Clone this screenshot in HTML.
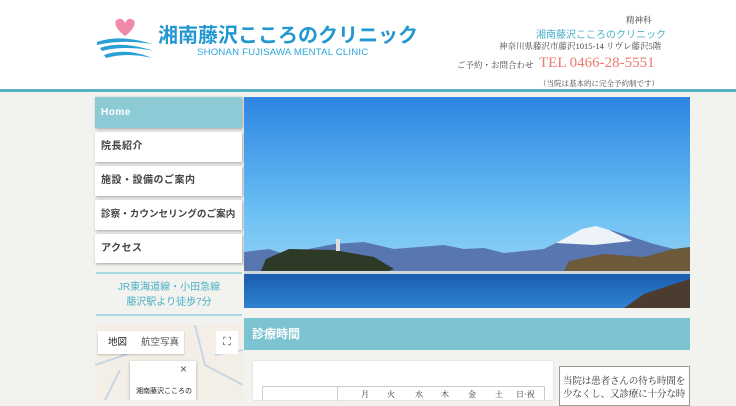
<!DOCTYPE html>
<html><head><meta charset="utf-8">
<style>
*{margin:0;padding:0;box-sizing:border-box}
body{width:736px;height:400px;overflow:hidden;background:#f2f2ee;font-family:"Liberation Sans","Noto Sans CJK JP",sans-serif;position:relative}
.hdr{position:absolute;left:0;top:0;width:736px;height:89px;background:#fff}
.line{position:absolute;left:0;top:89px;width:736px;height:3px;background:#56b3c6}
.abs{position:absolute;white-space:nowrap}
.nav{position:absolute;left:95px;width:147px;background:#fff;box-shadow:1px 1px 3px rgba(0,0,0,.35);font-size:10px;color:#444;padding-left:6px;font-weight:bold;letter-spacing:.5px}
.sep{position:absolute;left:96px;width:146px;height:2px;background:#a9d9e2}
</style></head><body>
<div class="hdr"></div>
<div class="line"></div>
<svg class="abs" style="left:94px;top:14px" width="60" height="50" viewBox="0 0 60 50">
<path d="M31 22 C20 14 19 6 25 5 C28 4 30 7 31 9 C32 7 34 4 37 5 C43 6 42 14 31 22Z" fill="#f08aa8"/>
<path d="M3 28 C20 22 40 24 58 30 C40 27 20 27 3 31Z" fill="#2a9fd6"/>
<path d="M6 34 C22 28 42 31 60 37 C42 33 22 33 8 37Z" fill="#2a9fd6"/>
<path d="M10 41 C26 35 44 38 58 44 C42 40 26 40 12 44Z" fill="#2a9fd6"/>
</svg>
<div class="abs" style="left:158px;top:19px;font-size:20px;color:#2397cf;font-weight:bold;letter-spacing:0">湘南藤沢こころのクリニック</div>
<div class="abs" style="left:197px;top:47px;font-size:9.6px;color:#2aa6d8;letter-spacing:.2px">SHONAN FUJISAWA MENTAL CLINIC</div>
<div class="abs" style="left:626px;top:14px;font-size:8.5px;color:#444;font-family:'Liberation Serif','Noto Serif CJK SC',serif">精神科</div>
<div class="abs" style="left:536px;top:26px;font-size:10px;color:#4ab0c8">湘南藤沢こころのクリニック</div>
<div class="abs" style="left:499px;top:40px;font-size:8.5px;color:#444;font-family:'Liberation Serif','Noto Serif CJK SC',serif">神奈川県藤沢市藤沢1015-14 リヴレ藤沢5階</div>
<div class="abs" style="left:457px;top:59px;font-size:8.5px;color:#444;font-family:'Liberation Serif','Noto Serif CJK SC',serif">ご予約・お問合わせ</div>
<div class="abs" style="left:539px;top:55px;font-size:15px;color:#ea7b6c;font-family:'Liberation Serif',serif">TEL 0466-28-5551</div>
<div class="abs" style="left:539px;top:78px;font-size:7.5px;color:#444;font-family:'Liberation Serif','Noto Serif CJK SC',serif">（当院は基本的に完全予約制です）</div>

<div class="nav" style="top:97px;height:31px;line-height:31px;background:#8ccbd6;color:#fff">Home</div>
<div class="nav" style="top:132px;height:30px;line-height:30px">院長紹介</div>
<div class="nav" style="top:166px;height:30px;line-height:30px">施設・設備のご案内</div>
<div class="nav" style="top:200px;height:30px;line-height:30px;letter-spacing:0;font-size:9.6px">診察・カウンセリングのご案内</div>
<div class="nav" style="top:234px;height:29px;line-height:29px">アクセス</div>
<div class="sep" style="top:272px"></div>
<div class="abs" style="left:96px;width:146px;text-align:center;top:280px;font-size:10px;color:#4ab0c8;line-height:15px">JR東海道線・小田急線<br>藤沢駅より徒歩7分</div>
<div class="sep" style="top:314px"></div>
<div class="abs" style="left:95px;top:325px;width:148px;height:75px;background:#f3efe6;overflow:hidden">
<svg width="148" height="75" style="position:absolute;left:0;top:0"><path d="M0 40 L30 30 L50 20 M10 75 L25 45 M100 0 L110 40 L148 60 M120 30 L148 25" stroke="#c6d6e6" stroke-width="2" fill="none"/></svg>
<div class="abs" style="left:3px;top:6px;width:86px;height:23px;background:#fff;font-size:9.5px;line-height:23px;color:#222;box-shadow:0 1px 2px rgba(0,0,0,.2)"><span style="margin-left:10px">地図</span><span style="margin-left:14px;color:#555">航空写真</span></div>
<div class="abs" style="left:121px;top:6px;width:22px;height:23px;background:#fff;font-size:11px;text-align:center;line-height:23px;color:#444">⛶</div>
<div class="abs" style="left:35px;top:36px;width:66px;height:45px;background:#fff;box-shadow:0 1px 3px rgba(0,0,0,.3)"><div class="abs" style="left:50px;top:1px;font-size:12px;color:#555">×</div><div class="abs" style="left:6px;top:25px;font-size:7px;color:#222">湘南藤沢こころの</div></div>
</div>

<svg class="abs" style="left:244px;top:97px" width="446" height="211" viewBox="0 0 446 211">
<defs>
<linearGradient id="sky" x1="0" y1="0" x2="0" y2="1"><stop offset="0" stop-color="#2d84e2"/><stop offset=".55" stop-color="#6cc0f4"/><stop offset="1" stop-color="#a9dcf5"/></linearGradient>
<linearGradient id="sea" x1="0" y1="0" x2="0" y2="1"><stop offset="0" stop-color="#1b5cb0"/><stop offset="1" stop-color="#2f82d0"/></linearGradient>
</defs>
<rect width="446" height="211" fill="url(#sky)"/>
<path d="M0 155 L25 152 L40 157 L90 147 L120 145 L150 152 L200 148 L220 152 L240 151 L260 156 L300 152 L330 137 L350 130 L370 134 L410 147 L430 152 L446 154 L446 180 L0 180Z" fill="#5877b0"/>
<path d="M312 146 L338 132 L352 129 L365 133 L388 144 L350 148Z" fill="#eef3fa"/>
<path d="M16 176 L22 162 L45 152 L90 153 L130 160 L150 172 L140 176Z" fill="#2e3a28"/>
<rect x="92" y="142" width="4" height="12" fill="#ddd"/>
<path d="M318 178 L325 164 L360 157 L400 160 L430 152 L446 150 L446 180Z" fill="#6c5a3a"/>
<rect x="0" y="174" width="446" height="3" fill="#cfd6dc"/>
<rect x="0" y="177" width="446" height="34" fill="url(#sea)"/>
<path d="M380 211 L400 197 L430 187 L446 182 L446 211Z" fill="#4a3d30"/>
</svg>

<div class="abs" style="left:244px;top:318px;width:446px;height:32px;background:#7cc4d2;color:#fff;font-size:12px;line-height:32px;padding-left:8px;font-weight:bold">診療時間</div>
<div class="abs" style="left:253px;top:361px;width:300px;height:39px;background:#fff;box-shadow:0 0 2px rgba(0,0,0,.15)"></div>
<div class="abs" style="left:262px;top:386px;width:283px;height:14px;border:1px solid #ccc;border-bottom:none;font-family:'Liberation Serif','Noto Serif CJK SC',serif;font-size:8px;color:#333">
<span class="abs" style="left:74px;top:0;height:14px;border-left:1px solid #ccc"></span>
<span class="abs" style="left:98px;top:2px">月</span><span class="abs" style="left:124px;top:2px">火</span><span class="abs" style="left:152px;top:2px">水</span><span class="abs" style="left:178px;top:2px">木</span><span class="abs" style="left:205px;top:2px">金</span><span class="abs" style="left:232px;top:2px">土</span><span class="abs" style="left:253px;top:2px">日·祝</span>
</div>
<div class="abs" style="left:559px;top:366px;width:131px;height:40px;border:1px solid #999;background:#fff;padding:8px 0 0 3px;font-family:'Liberation Serif','Noto Serif CJK SC',serif;font-size:9.6px;letter-spacing:-.2px;line-height:13px;color:#333;overflow:hidden">当院は患者さんの待ち時間を<br>少なくし、又診療に十分な時</div>
</body></html>
